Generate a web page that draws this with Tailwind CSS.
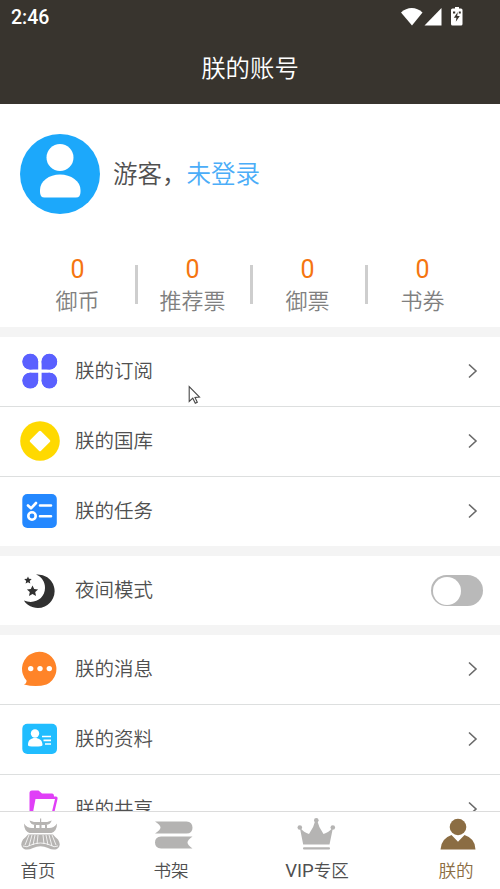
<!DOCTYPE html>
<html lang="zh-CN">
<head>
<meta charset="utf-8">
<title>朕的账号</title>
<script src="https://cdn.jsdelivr.net/npm/@tailwindcss/browser@4"></script>
</head>
<body class="bg-white">
<div class="relative flex h-[889px] w-[500px] flex-col overflow-hidden bg-white font-['Noto_Sans_CJK_SC',sans-serif] font-[350] text-[#505050]">
  <header class="h-[104px] shrink-0 bg-[#38342e] text-white">
    <div class="flex h-[34px] items-center justify-between pl-[11px] pr-[37px]">
      <span class="pt-[2px] font-['Roboto',sans-serif] text-[19.5px] font-medium leading-[34px]">2:46</span>
      <svg class="h-[34px] w-[62px]" viewBox="401 0 62 34" fill="#fff">
        <path d="M401 12.500C407 6.500 416.500 6.500 422.500 12.500L412 25.500Z"/>
        <path d="M441.500 8V25.500H424.500Z"/>
        <path d="M455 7h4v1.500h2q1.500 0 1.500 1.500v14q0 1.500-1.500 1.500h-8.500q-1.500 0-1.500-1.500V10q0-1.500 1.500-1.500H455Z"/>
        <path d="M457.800 12l-4 5.800h2.600l-.6 4 4-5.800h-2.600ZM453 11.500h2.200v2H453ZM458.800 11.500h2v2h-2Z" fill="#38342e"/>
      </svg>
    </div>
    <h1 class="text-center text-[24.400px] font-[350] leading-[65px]">朕的账号</h1>
  </header>

  <section class="flex h-[140px] shrink-0 items-center gap-[13px] pl-5">
    <svg class="size-20" viewBox="0 0 80 80">
      <circle cx="40" cy="40" r="40" fill="#1ca8fb"/>
      <circle cx="40" cy="23.500" r="13.500" fill="#fff"/>
      <path d="M20 56C20 47 29 40.500 40 40.500S60.500 47 60.500 56V58Q60.500 63.500 56 63.500H24.500Q20 63.500 20 58Z" fill="#fff"/>
    </svg>
    <p class="pb-[2px] text-[24.500px] leading-[36px]">游客，<span class="text-[#4badf8]">未登录</span></p>
  </section>

  <section class="h-[83px] shrink-0 pl-5 pr-5 pt-[10px] text-center">
    <div class="grid grid-cols-4 text-[22px] text-[#808080]">
      <div class="relative"><div class="font-['Roboto',sans-serif] text-[25px] font-normal leading-[31px] text-[#f57510]">0</div><div class="leading-[29px]">御币</div><i class="absolute -right-[3px] top-[11px] h-[39px] w-[3px] bg-[#cecece]"></i></div>
      <div class="relative"><div class="font-['Roboto',sans-serif] text-[25px] font-normal leading-[31px] text-[#f57510]">0</div><div class="leading-[29px]">推荐票</div><i class="absolute -right-[3px] top-[11px] h-[39px] w-[3px] bg-[#cecece]"></i></div>
      <div class="relative"><div class="font-['Roboto',sans-serif] text-[25px] font-normal leading-[31px] text-[#f57510]">0</div><div class="leading-[29px]">御票</div><i class="absolute -right-[3px] top-[11px] h-[39px] w-[3px] bg-[#cecece]"></i></div>
      <div><div class="font-['Roboto',sans-serif] text-[25px] font-normal leading-[31px] text-[#f57510]">0</div><div class="leading-[29px]">书券</div></div>
    </div>
  </section>

  <main class="min-h-0 flex-1 overflow-hidden text-[19.500px]">
    <div class="h-[10px] bg-[#f4f4f4]"></div>
    <div class="flex h-[70px] items-center border-b border-[#dddfdf] pb-px pl-5 pr-[22px]">
      <svg class="mr-[15px] size-10" viewBox="0 0 40 40" fill="#5a60ff">
        <path d="M18.200 18.500H10A7.800 7.700 0 1 1 18.200 10.800ZM21.600 18.500H29.500A7.800 7.700 0 1 0 21.600 10.800ZM18.200 21.700H10A7.800 7.700 0 1 0 18.200 29.500ZM21.600 21.700H29.500A7.800 7.700 0 1 1 21.600 29.500Z"/>
        <rect x="2.300" y="2.800" width="15.900" height="15.700" rx="7.700"/><rect x="21.600" y="2.800" width="15.500" height="15.700" rx="7.700"/><rect x="2.300" y="21.700" width="15.900" height="15.700" rx="7.700"/><rect x="21.600" y="21.700" width="15.500" height="15.700" rx="7.700"/>
      </svg>
      <span class="flex-1 pb-[2px]">朕的订阅</span>
      <svg class="h-4 w-[10px]" viewBox="0 0 10 16" fill="none" stroke="#696969" stroke-width="1.600"><path d="M1 1.500L8 8L1 14.500"/></svg>
    </div>
    <div class="flex h-[70px] items-center border-b border-[#dddfdf] pb-px pl-5 pr-[22px]">
      <svg class="mr-[15px] size-10" viewBox="0 0 40 40">
        <circle cx="20" cy="20" r="19.800" fill="#ffd900"/><rect x="12.300" y="12.300" width="15.400" height="15.400" rx="1.500" transform="rotate(45 20 20)" fill="#fff"/>
      </svg>
      <span class="flex-1 pb-[2px]">朕的国库</span>
      <svg class="h-4 w-[10px]" viewBox="0 0 10 16" fill="none" stroke="#696969" stroke-width="1.600"><path d="M1 1.500L8 8L1 14.500"/></svg>
    </div>
    <div class="flex h-[69px] items-center pb-px pl-5 pr-[22px]">
      <svg class="mr-[15px] size-10" viewBox="0 0 40 40">
        <rect x="2.300" y="3" width="34.500" height="34" rx="5" fill="#2488ff"/>
        <g fill="none" stroke="#fff" stroke-width="2.600" stroke-linecap="round" stroke-linejoin="round"><path d="M8 14.500L11 17.300L16 12M20 14.500H31M20 25.300H31"/><circle cx="12" cy="25" r="3.700"/></g>
      </svg>
      <span class="flex-1 pb-[2px]">朕的任务</span>
      <svg class="h-4 w-[10px]" viewBox="0 0 10 16" fill="none" stroke="#696969" stroke-width="1.600"><path d="M1 1.500L8 8L1 14.500"/></svg>
    </div>
    <div class="h-[10px] bg-[#f4f4f4]"></div>
    <div class="flex h-[69px] items-center pl-5 pr-[17px]">
      <svg class="mr-[15px] size-10" viewBox="0 0 40 40" fill="#303030">
        <path d="M16 3.500A16.800 16.800 0 1 1 3.800 29.500C15 34 25 27 25 17C25 11 22 6 16 3.500Z"/>
        <path d="M8 5.500l1 2.300 2.700.2-2 1.900.6 2.600L8 11.200l-2.400 1.300.6-2.600-2-1.900 2.700-.2ZM12.500 14.500l1.700 3.500 3.900.4-2.900 2.700.8 3.900-3.500-1.900L9 25l.8-3.900-2.900-2.700 3.900-.4Z"/>
      </svg>
      <span class="flex-1 pb-[3px]">夜间模式</span>
      <div class="h-[31px] w-[52px] rounded-full bg-[#b9b9b9] p-[1.500px]"><div class="h-[28px] w-[28px] rounded-full bg-white"></div></div>
    </div>
    <div class="h-[10px] bg-[#f4f4f4]"></div>
    <div class="flex h-[70px] items-center border-b border-[#dddfdf] pb-px pl-5 pr-[22px]">
      <svg class="mr-[15px] size-10" viewBox="0 0 40 40">
        <path d="M4 35.500Q7 34.500 6.500 31.500A17.200 17.200 0 1 1 26.500 35.500Q16 38.500 4 35.500Z" fill="#ff8428"/>
        <g fill="#fff"><circle cx="10.700" cy="19.600" r="2.700"/><circle cx="20" cy="19.600" r="2.700"/><circle cx="29.300" cy="19.600" r="2.700"/></g>
      </svg>
      <span class="flex-1 pb-[2px]">朕的消息</span>
      <svg class="h-4 w-[10px]" viewBox="0 0 10 16" fill="none" stroke="#696969" stroke-width="1.600"><path d="M1 1.500L8 8L1 14.500"/></svg>
    </div>
    <div class="flex h-[70px] items-center border-b border-[#dddfdf] pb-px pl-5 pr-[22px]">
      <svg class="mr-[15px] size-10" viewBox="0 0 40 40">
        <rect x="2.300" y="4.700" width="34.700" height="30.300" rx="5" fill="#21bdff"/>
        <g fill="#fff"><circle cx="15" cy="14.500" r="4.200"/><path d="M8 26C8 21 11 19 15 19S22.500 21 22.500 26Q22.500 27.500 15 27.500T8 26Z"/></g>
        <path d="M22 17.500H31M23.500 21.300H31M25 25H31" stroke="#fff" stroke-width="1.700"/>
      </svg>
      <span class="flex-1 pb-[2px]">朕的资料</span>
      <svg class="h-4 w-[10px]" viewBox="0 0 10 16" fill="none" stroke="#696969" stroke-width="1.600"><path d="M1 1.500L8 8L1 14.500"/></svg>
    </div>
    <div class="flex h-[70px] items-center pb-[2px] pl-5 pr-[22px]">
      <svg class="mr-[15px] size-10" viewBox="0 0 40 40">
        <path d="M9.500 30V4Q9.500 1.500 12 1.500H18.500L22 4.500H32Q34 4.500 34 7.500H36Q38 7.500 37.500 10L33 29Q32 32 29 32H11Q9.500 32 9.500 30Z" fill="#e03ff7"/>
        <path d="M15.500 10H35L30.500 29H12Z" fill="#fff"/>
      </svg>
      <span class="flex-1 pb-[2px]">朕的共享</span>
      <svg class="h-4 w-[10px]" viewBox="0 0 10 16" fill="none" stroke="#696969" stroke-width="1.600"><path d="M1 1.500L8 8L1 14.500"/></svg>
    </div>
  </main>

  <nav class="grid h-[78px] shrink-0 grid-cols-[134px_143px_141px_1fr] border-t border-[#dcdcdc] bg-white pl-5 pt-[3px] text-[17.600px] leading-[30px]">
    <div class="flex w-10 flex-col items-center">
      <svg class="h-10 w-10" viewBox="0 0 40 40" fill="#b6b4b2">
        <path d="M20 3.500h1.200V7h6l4.500-1.500Q30.500 9.500 26 10H15Q10.500 9.500 9.500 5.500L14 7h6ZM4 8.500Q7 13 12 13H29Q34 13 37 8.500Q37 16 31.500 18H9.500Q4 16 4 8.500ZM14 10h2v3h-2zM19.500 10h2v3h-2zM25 10h2v3h-2Z"/>
        <path d="M8 19.500H33Q35 22 38 24.500Q42 31 37 34Q33 35.500 28 33Q20.500 29.500 13 33Q8 35.500 4 34Q-1 31 3 24.500Q6 22 8 19.500Z"/>
        <g fill="none" stroke="#fff" stroke-width=".8"><path d="M9 20L5 30M12 20L9 31M15 20L13 30M18 20L17 29M23 20L24 29M26 20L28 30M29 20L32 31M32 20L36 30M3 31Q7 33 11 30Q20.500 26 30 30Q34 33 38 31"/></g>
      </svg>
      <span class="-ml-1 whitespace-nowrap">首页</span>
    </div>
    <div class="flex w-10 flex-col items-center">
      <svg class="h-10 w-10" viewBox="0 0 40 40" fill="#b4b3b2">
        <path d="M1 6.500H32.500Q38.500 7 38.500 12.700T32.500 18.500H1Q6.500 15 6.500 12.500T1 6.500Z"/>
        <path d="M38.500 21.500H7Q1 22 1 27.500T7 33.500H38.500Q33.500 30 33.500 27.500T38.500 21.500Z"/>
      </svg>
      <span class="-ml-[6px] whitespace-nowrap">书架</span>
    </div>
    <div class="flex w-10 flex-col items-center">
      <svg class="h-10 w-10" viewBox="0 0 40 40" fill="#b5b4b3">
        <circle cx="19.300" cy="5.300" r="2.300"/><circle cx="2.800" cy="12.500" r="2.300"/><circle cx="35.800" cy="12.500" r="2.300"/>
        <path d="M2.800 12.500Q7 17.500 12 19Q17 12 18.500 5H20Q21.500 12 26.500 19Q31.500 17.500 36 12.500L32.500 29.500H6.200Z"/><rect x="6" y="32.300" width="27" height="2.200" rx="1"/>
      </svg>
      <span class="whitespace-nowrap"><span class="font-['Roboto',sans-serif] text-[18.500px] font-normal">VIP</span>专区</span>
    </div>
    <div class="flex w-10 flex-col items-center text-[#8b6d43]">
      <svg class="h-10 w-10" viewBox="0 0 40 40" fill="#8b6d43">
        <circle cx="20" cy="12" r="8.300"/><path d="M13.500 20L20 26.800L26.500 20Q37.500 23.500 37.500 34.500H2.500Q3 23.500 13.500 20Z"/>
      </svg>
      <span class="-ml-1 whitespace-nowrap">朕的</span>
    </div>
  </nav>

  <svg class="absolute left-[188px] top-[385px] h-5 w-[14px]" viewBox="0 0 14 20" fill="#fff" stroke="#484848" stroke-width="1.100"><path d="M1.200 1.500V16.500L4.800 13.200L7.300 18.200L9.300 17.200L7 12.400L11.500 12Z"/></svg>
</div>
</body>
</html>
